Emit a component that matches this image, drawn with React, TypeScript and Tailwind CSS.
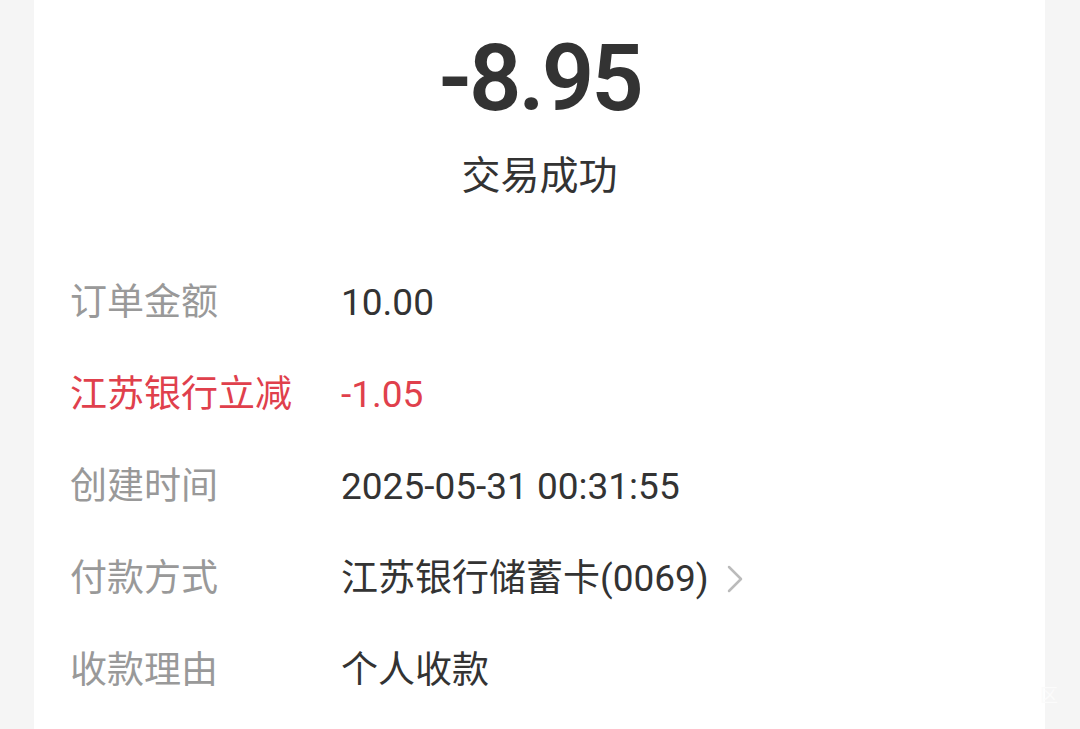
import React from "react";

const rows: { label: string; value: string; red?: boolean; arrow?: boolean }[] = [
  { label: "订单金额", value: "10.00" },
  { label: "江苏银行立减", value: "-1.05", red: true },
  { label: "创建时间", value: "2025-05-31 00:31:55" },
  { label: "付款方式", value: "江苏银行储蓄卡(0069)", arrow: true },
  { label: "收款理由", value: "个人收款" },
];

export default function App() {
  return (
    <div
      className="relative w-[1080px] h-[729px] overflow-hidden bg-[#f5f5f5]"
      style={{ fontFamily: 'Roboto, "Noto Sans CJK SC", sans-serif' }}
    >
      <div className="ml-[34px] w-[1011px] h-[729px] bg-white">
        <div className="pt-[33px] flex flex-col items-center">
          <div className="text-[92px] leading-[92px] font-semibold text-[#333333] tracking-[-3px]">-8.95</div>
          <div className="mt-[31px] text-[39px] leading-[40px] text-[#333333]">交易成功</div>
        </div>
        <div className="mt-[61px] pl-[36px] flex flex-col">
          {rows.map((r) => (
            <div key={r.label} className="h-[92px] flex items-center text-[37px] leading-[44px]">
              <div className={`w-[271px] shrink-0 ${r.red ? "text-[#e0404c]" : "text-[#999999]"}`}>{r.label}</div>
              <div className={`flex items-center ${r.red ? "text-[#e0404c]" : "text-[#333333]"}`}>
                <span>{r.value}</span>
                {r.arrow && (
                  <svg className="ml-[17px]" width="18" height="28" viewBox="0 0 18 28" fill="none">
                    <path d="M3 2 L15 14 L3 26" stroke="#bbbbbb" strokeWidth="2.5" strokeLinecap="round" strokeLinejoin="round" />
                  </svg>
                )}
              </div>
            </div>
          ))}
        </div>
      </div>
      <div className="absolute left-[1040px] top-[686px] text-[18px] leading-[20px] text-[#fbfbfb]">区</div>
    </div>
  );
}
